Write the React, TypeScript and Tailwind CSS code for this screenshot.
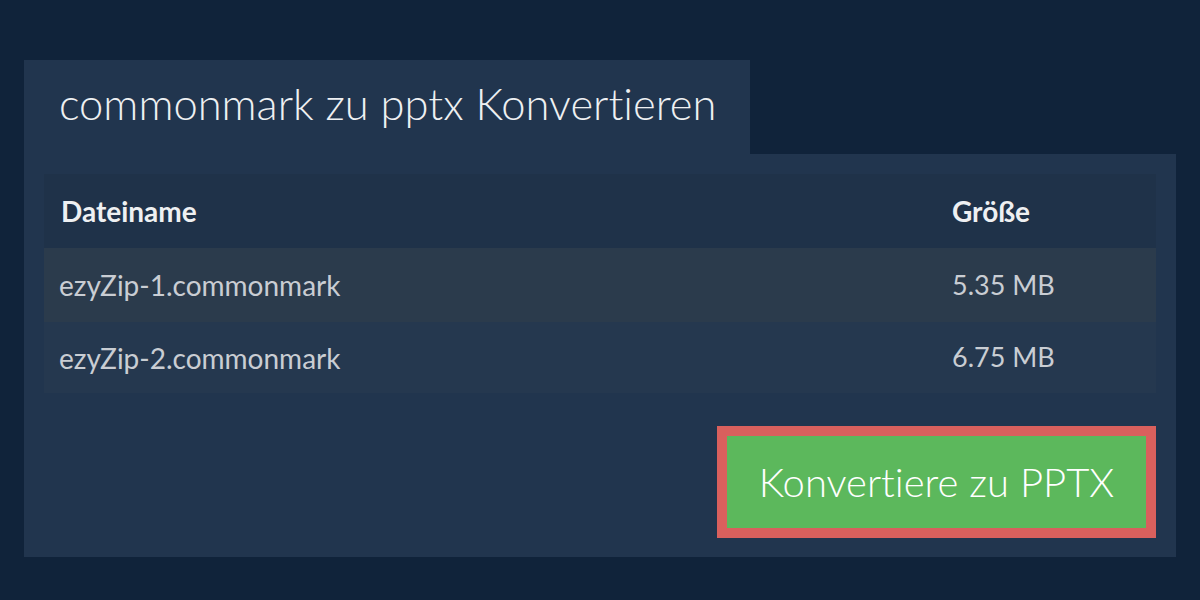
const files = [
  { name: "ezyZip-1.commonmark", size: "5.35 MB" },
  { name: "ezyZip-2.commonmark", size: "6.75 MB" },
];

export default function App() {
  return (
    <div
      className="w-[1200px] h-[600px] bg-[#10233a] pt-[60px] px-6 [font-variant-ligatures:none]"
      style={{ fontFamily: "Lato, 'Open Sans', sans-serif" }}
    >
      <div className="w-[726px] h-[94px] bg-[#21354e] pl-[35px] pt-[20px]">
        <h1 className="text-[43.5px] leading-[46px] font-light text-[#eef0f2]">
          commonmark zu pptx Konvertieren
        </h1>
      </div>
      <div className="bg-[#21354e] px-5 pt-5 pb-[19px]">
        <table className="w-full border-collapse text-left">
          <thead>
            <tr className="bg-[#1f3249] h-[74px]">
              <th className="pl-[17px] text-[28px] font-bold text-[#eef0f2]">
                Dateiname
              </th>
              <th className="w-[220px] pl-4 text-[28px] font-bold text-[#eef0f2]">
                Größe
              </th>
            </tr>
          </thead>
          <tbody>
            {files.map((f, i) => (
              <tr
                key={f.name}
                className={i === 0 ? "bg-[#2b3b4c] h-[74px]" : "bg-[#25384f] h-[71px]"}
              >
                <td className="pl-[15px] text-[28px] text-[#c9cdd3]">{f.name}</td>
                <td className="pl-4 text-[27px] text-[#c9cdd3]">{f.size}</td>
              </tr>
            ))}
          </tbody>
        </table>
        <div className="flex justify-end mt-[33px]">
          <button className="w-[439px] h-[112px] bg-[#5cb85c] border-[10px] border-[#d9605d] text-[40px] font-light text-white">
            Konvertiere zu PPTX
          </button>
        </div>
      </div>
    </div>
  );
}
